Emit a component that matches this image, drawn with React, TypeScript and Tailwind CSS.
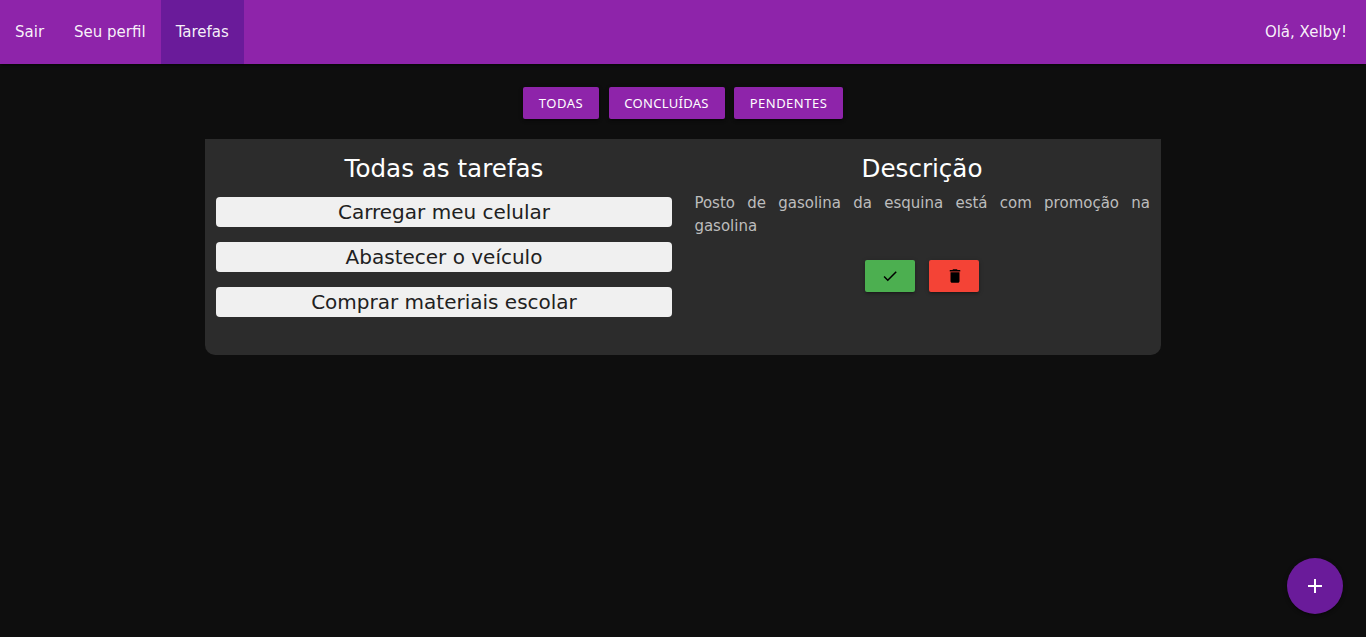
import React from "react";

const shadow =
  "shadow-[0_2px_2px_0_rgba(0,0,0,0.14),0_3px_1px_-2px_rgba(0,0,0,0.12),0_1px_5px_0_rgba(0,0,0,0.2)]";

const links = [
  { label: "Sair", active: false },
  { label: "Seu perfil", active: false },
  { label: "Tarefas", active: true },
];

const filters = [
  { label: "TODAS", style: "w-[76px] tracking-[0.5px]" },
  { label: "CONCLUÍDAS", style: "w-[116px] tracking-[0.3px]" },
  { label: "PENDENTES", style: "w-[109px] tracking-[0.5px]" },
];

const tasks = ["Carregar meu celular", "Abastecer o veículo", "Comprar materiais escolar"];

export default function App() {
  return (
    <div className="relative h-[637px] w-full overflow-hidden bg-[#0e0e0e] font-['DejaVu_Sans',sans-serif] text-[15px] text-white">
      <nav className={`flex h-16 items-stretch justify-between bg-[#8e24aa] leading-[64px] text-white/95 ${shadow}`}>
        <ul className="flex">
          {links.map((l) => (
            <li key={l.label} className={l.active ? "bg-[#6a1b9a]" : ""}>
              <a className="block px-[15px]">{l.label}</a>
            </li>
          ))}
        </ul>
        <span className="pr-[19px]">Olá, Xelby!</span>
      </nav>

      <div className="mt-[23px] flex justify-center gap-[9.5px]">
        {filters.map((f) => (
          <button
            key={f.label}
            className={`h-8 rounded-[2px] bg-[#8e24aa] text-center font-['Noto_Sans','Open_Sans',sans-serif] text-[13px] leading-8 ${f.style} ${shadow}`}
          >
            {f.label}
          </button>
        ))}
      </div>

      <main className="mx-auto mt-5 flex h-[216px] w-[956px] rounded-b-[10px] bg-[#2c2c2c]">
        <section className="w-1/2 px-[11px] pt-4 text-center">
          <h2 className="text-[24.6px] leading-[27px]">Todas as tarefas</h2>
          <ul className="mt-[15px] flex flex-col gap-[15px]">
            {tasks.map((t) => (
              <li key={t} className="h-[30px] rounded-[4px] bg-[#f0f0f0] text-[20px] leading-[30px] text-[#212121]">
                {t}
              </li>
            ))}
          </ul>
        </section>
        <section className="w-1/2 px-[11px] pt-4">
          <h2 className="text-center text-[24.6px] leading-[27px]">Descrição</h2>
          <p className="mt-[10px] pl-[0.4px] text-justify leading-[23px] text-[#bdbdbd]">
            Posto de gasolina da esquina está com promoção na gasolina
          </p>
          <div className="mt-[22px] flex justify-center gap-[14px]">
            <button className={`flex h-8 w-[50px] items-center justify-center rounded-[2px] bg-[#4caf50] ${shadow}`}>
              <svg className="size-[18px]" viewBox="0 0 24 24" fill="#000">
                <path d="M9 16.17L4.83 12l-1.42 1.41L9 19 21 7l-1.41-1.41z" />
              </svg>
            </button>
            <button className={`flex h-8 w-[50px] items-center justify-center rounded-[2px] bg-[#f44336] ${shadow}`}>
              <svg className="ml-[1px] size-[18px]" viewBox="0 0 24 24" fill="#000">
                <path d="M6 19c0 1.1.9 2 2 2h8c1.1 0 2-.9 2-2V7H6v12zM19 4h-3.5l-1-1h-5l-1 1H5v2h14V4z" />
              </svg>
            </button>
          </div>
        </section>
      </main>

      <button
        className={`absolute right-[23px] bottom-[23px] flex size-14 items-center justify-center rounded-full bg-[#6a1b9a] ${shadow}`}
      >
        <svg className="size-6" viewBox="0 0 24 24" fill="#fff">
          <path d="M19 13h-6v6h-2v-6H5v-2h6V5h2v6h6v2z" />
        </svg>
      </button>
    </div>
  );
}
